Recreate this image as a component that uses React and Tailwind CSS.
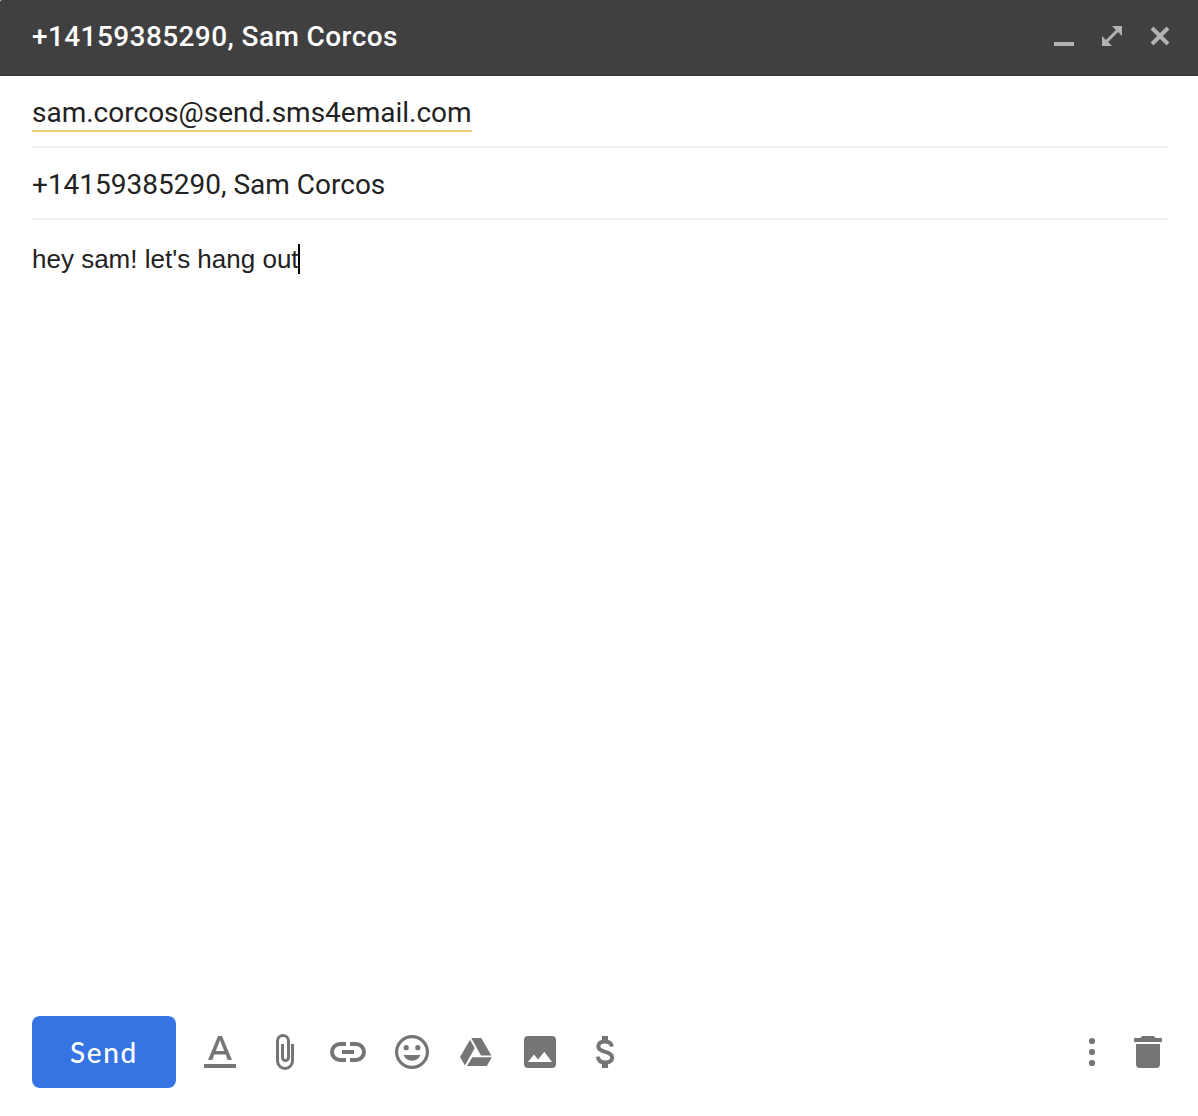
function Icon({ children }) {
  return (
    <svg viewBox="0 0 40 40" className="block size-10 shrink-0" fill="currentColor" aria-hidden="true">
      {children}
    </svg>
  );
}

function Header() {
  return (
    <header className="flex h-[76px] shrink-0 items-center justify-between rounded-tl-[2px] border-b border-[#3b383b] bg-[#404040] pr-[18px] pl-8 text-white">
      <h1 className="-mt-[2px] font-[Roboto,sans-serif] text-[28px] leading-9 font-medium tracking-[0.41px] whitespace-nowrap">
        +14159385290, Sam Corcos
      </h1>
      <div className="-mt-[3px] flex gap-2 text-[#b2b2b2]">
        <button aria-label="Minimize">
          <Icon>
            <path d="M10 26h20v4H10z" />
          </Icon>
        </button>
        <button aria-label="Full screen">
          <Icon>
            <path d="M20 10h10v10l-3.900-3.900-10 10L20 30H10V20l3.900 3.900 10-10z" />
          </Icon>
        </button>
        <button aria-label="Close">
          <Icon>
            <path d="M12 12l16 16M28 12L12 28" fill="none" stroke="currentColor" strokeWidth="4" />
          </Icon>
        </button>
      </div>
    </header>
  );
}

function Toolbar() {
  return (
    <div className="flex h-[72px] items-center">
      <button className="flex h-[72px] w-36 items-center justify-center rounded-lg bg-[#3574e2] pb-px font-[Lato,sans-serif] text-[28px] leading-9 font-medium tracking-[1.6px] text-white">
        Send
      </button>
      <div className="ml-6 flex gap-6 text-[#757575]">
        <button aria-label="Formatting options">
          <Icon>
            <path d="M4 32h32v4H4z" />
            <path fillRule="evenodd" d="M18 4h4l10 24h-4.300l-2.100-5.400H14.400L12.300 28H8zM20 8.200L15.800 19h8.400z" />
          </Icon>
        </button>
        <button aria-label="Attach files">
          <Icon>
            <path
              d="M28.500 12v17a7.500 7.500 0 0 1-15 0V9a5.500 5.500 0 0 1 11 0v16.500a3 3 0 0 1-6 0V12"
              fill="none"
              stroke="currentColor"
              strokeWidth="3"
            />
          </Icon>
        </button>
        <button aria-label="Insert link">
          <Icon>
            <path d="M18 12h-6a8 8 0 0 0 0 16h6M22 12h6a8 8 0 0 1 0 16h-6M14 20h12" fill="none" stroke="currentColor" strokeWidth="4" />
          </Icon>
        </button>
        <button aria-label="Insert emoji">
          <Icon>
            <circle cx="20" cy="20" r="15.400" fill="none" stroke="currentColor" strokeWidth="3.200" />
            <circle cx="14.200" cy="15.700" r="2.600" />
            <circle cx="25.800" cy="15.700" r="2.600" />
            <path d="M11.500 23h17a9.200 9.200 0 0 1-17 0z" />
          </Icon>
        </button>
        <button aria-label="Insert files using Drive">
          <Icon>
            <path d="M14 7.800l4.700 8.300L9 33.500 4 25z" />
            <path d="M15.200 6h10l10.200 17.400H25z" />
            <path d="M16.300 25.200h19.600L30.800 34H11z" />
          </Icon>
        </button>
        <button aria-label="Insert photo">
          <Icon>
            <path fillRule="evenodd" d="M8 4h24a4 4 0 0 1 4 4v24a4 4 0 0 1-4 4H8a4 4 0 0 1-4-4V8a4 4 0 0 1 4-4zM8 30h24l-7.700-10.200-6.300 7.800-4.100-5.200z" />
          </Icon>
        </button>
        <button aria-label="Send money">
          <Icon>
            <path d="M18 4h6v5h-6zM18 31h6v5h-6z" />
            <path
              d="M27.800 14.600c-.4-3.700-3-5.200-6.800-5.200-4 0-6.700 1.800-6.700 4.900 0 3.300 3 4.500 6.900 5.600 4.200 1.100 7 2.300 7 5.700 0 3.200-2.900 5-7 5-4.300 0-7-2-7.300-5.900"
              fill="none"
              stroke="currentColor"
              strokeWidth="4"
            />
          </Icon>
        </button>
      </div>
      <div className="ml-auto flex gap-4 text-[#757575]">
        <button aria-label="More options">
          <Icon>
            <circle cx="20" cy="9" r="3.100" />
            <circle cx="20" cy="20" r="3.100" />
            <circle cx="20" cy="31" r="3.100" />
          </Icon>
        </button>
        <button aria-label="Discard draft">
          <Icon>
            <path d="M14.500 4h11l2.500 2h6v4H6V6h6zM8 12h24v20a4 4 0 0 1-4 4H12a4 4 0 0 1-4-4z" />
          </Icon>
        </button>
      </div>
    </div>
  );
}

export default function App() {
  return (
    <main className="flex h-[1116px] w-[1198px] flex-col bg-white text-[#222222]">
      <Header />
      <div className="mr-[30px] ml-8 flex h-[72px] items-start border-b-2 border-[#eeeeee] pt-[19px] font-[Roboto,sans-serif] text-[28px]">
        <span className="h-[37px] border-b-2 border-[#f2cf6f] leading-9 whitespace-nowrap">
          sam.corcos@send.sms4email.com
        </span>
      </div>
      <div className="mr-[30px] ml-8 flex h-[72px] items-start border-b-2 border-[#eeeeee] pt-[19px] font-[Roboto,sans-serif] text-[28px] leading-9">
        +14159385290, Sam Corcos
      </div>
      <div className="flex grow items-start px-8 pt-6 font-['Liberation_Sans',Arial,sans-serif] text-[26px] leading-[30px]">
        <span>hey sam! let's hang out</span>
        <span className="-ml-px h-[30px] w-[2px] bg-black" />
      </div>
      <footer className="pr-[30px] pb-7 pl-8">
        <Toolbar />
      </footer>
    </main>
  );
}
